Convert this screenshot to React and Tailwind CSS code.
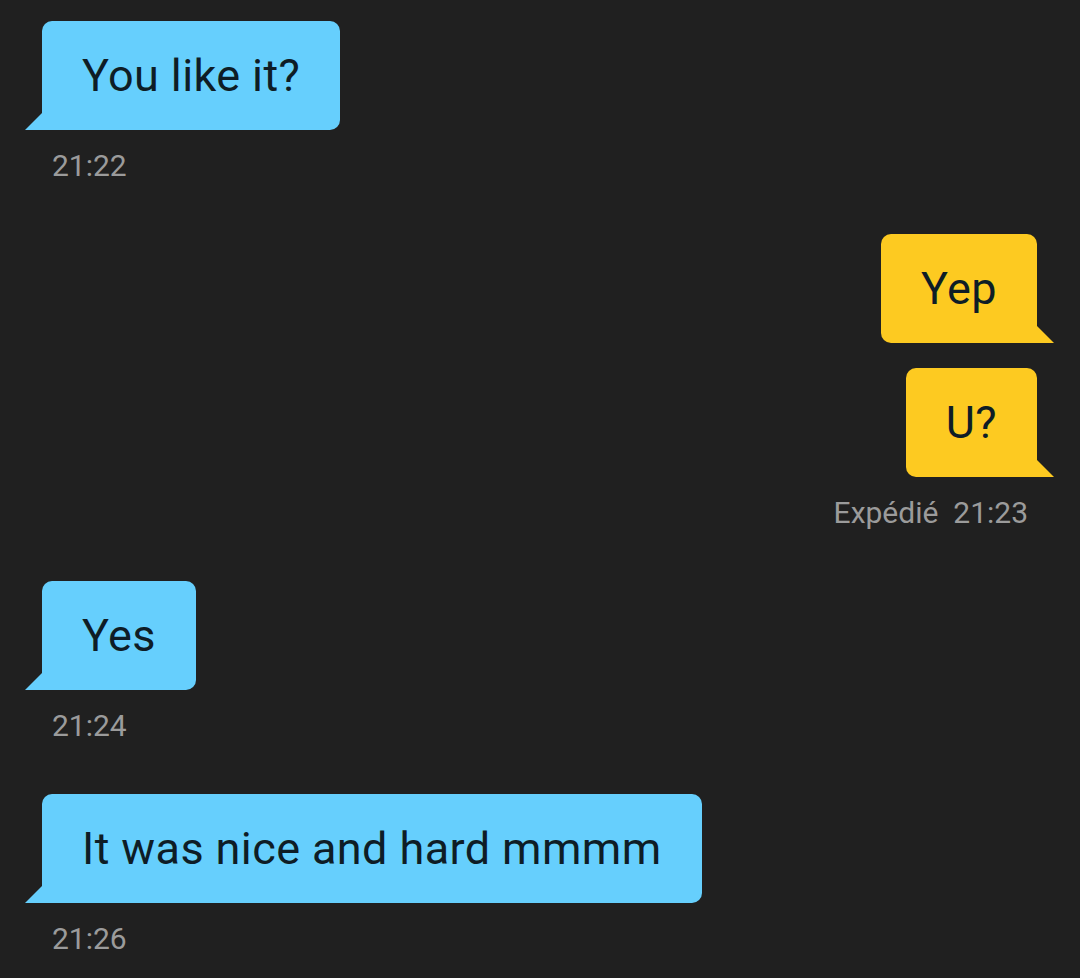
import React from "react";

const messages = [
  { side: "in", items: ["You like it?"], meta: "21:22" },
  { side: "out", items: ["Yep", "U?"], meta: "Expédié  21:23" },
  { side: "in", items: ["Yes"], meta: "21:24" },
  { side: "in", items: ["It was nice and hard mmmm"], meta: "21:26" },
];

const Bubble = ({ text, side }) => {
  const incoming = side === "in";
  return (
    <div
      className={`relative flex h-[109px] items-center px-10 text-[45px] tracking-[0.4px] text-[#0e1d26] ${
        incoming
          ? "rounded-[10px] rounded-bl-none bg-[#66cffd]"
          : "rounded-[10px] rounded-br-none bg-[#fdca21]"
      }`}
    >
      <span>{text}</span>
      {/* tail */}
      <svg
        width="18"
        height="18"
        viewBox="0 0 18 18"
        className={`absolute bottom-0 ${incoming ? "-left-[17px]" : "-right-[17px]"}`}
      >
        {incoming ? (
          <path d="M18 0 L0 18 L18 18 Z" fill="#66cffd" />
        ) : (
          <path d="M0 0 L18 18 L0 18 Z" fill="#fdca21" />
        )}
      </svg>
    </div>
  );
};

export default function App() {
  return (
    <div
      className="min-h-[978px] w-[1080px] bg-[#202020] pt-[21px]"
      style={{ fontFamily: "Roboto, 'Noto Sans', sans-serif" }}
    >
      <div className="flex flex-col gap-[50px] pl-[42px] pr-[43px]">
        {messages.map((m, i) => (
          <div
            key={i}
            className={`flex flex-col ${m.side === "in" ? "items-start" : "items-end"}`}
          >
            <div
              className={`flex flex-col gap-[25px] ${m.side === "in" ? "items-start" : "items-end"}`}
            >
              {m.items.map((t) => (
                <Bubble key={t} text={t} side={m.side} />
              ))}
            </div>
            <div
              className={`mt-[18px] h-9 whitespace-pre text-[30px] leading-9 text-[#9b9b9b] ${
                m.side === "in" ? "pl-[10px]" : "pr-[9px]"
              }`}
            >
              {m.meta}
            </div>
          </div>
        ))}
      </div>
    </div>
  );
}
